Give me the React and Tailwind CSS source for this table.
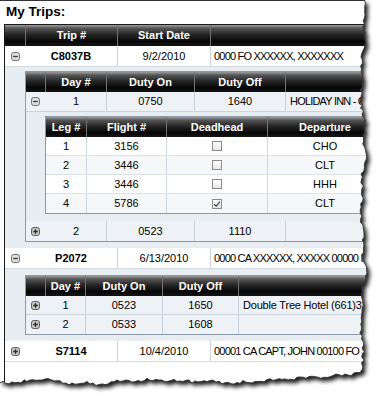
import React from "react";

const HDR =
  "bg-[linear-gradient(to_bottom,#9c9c9c_0%,#555555_16%,#262626_45%,#060606_78%,#151515_100%)]";

function Minus() {
  return (
    <svg width="9" height="9" viewBox="0 0 9 9">
      <rect x="0.5" y="0.5" width="8" height="8" rx="2.2" fill="#dcdcdc" stroke="#707070" />
      <path d="M2.2 4.5H6.8" stroke="#3a3a3a" strokeWidth="1.3" />
    </svg>
  );
}

function Plus() {
  return (
    <svg width="9" height="9" viewBox="0 0 9 9">
      <rect x="0.5" y="0.5" width="8" height="8" rx="2.2" fill="#c4c4c4" stroke="#5e5e5e" />
      <path d="M2.2 4.5H6.8M4.5 2.2V6.8" stroke="#2a2a2a" strokeWidth="1.3" />
    </svg>
  );
}

function Check({ checked }) {
  return (
    <div className="w-[10px] h-[10px] border border-[#8c8c8c] bg-[linear-gradient(to_bottom,#ffffff,#e6e6e6)] flex items-center justify-center">
      {checked && (
        <svg width="8" height="8" viewBox="0 0 8 8">
          <path d="M1.2 4.2L3.2 6.1L6.9 1.6" fill="none" stroke="#3b3b3b" strokeWidth="1.2" />
        </svg>
      )}
    </div>
  );
}

function MainHeader() {
  return (
    <div className={`flex h-[21px] ${HDR} text-white font-bold`}>
      <div className="w-[20px] shrink-0" />
      <div className="w-[92px] shrink-0 border-l border-[#727272] flex items-center justify-center">Trip #</div>
      <div className="w-[93px] shrink-0 border-l border-[#727272] flex items-center justify-center">Start Date</div>
      <div className="flex-1 border-l border-[#727272]" />
    </div>
  );
}

function MainRow({ open, trip, date, crew }) {
  return (
    <div className="flex h-[21px] bg-white border-b border-[#d2dae3]">
      <div className="w-[20px] shrink-0 flex items-center justify-center">{open ? <Minus /> : <Plus />}</div>
      <div className="w-[92px] shrink-0 flex items-center justify-center font-bold">{trip}</div>
      <div className="w-[93px] shrink-0 border-l border-[#ccd5df] flex items-center justify-center">{date}</div>
      <div className="flex-1 border-l border-[#ccd5df] flex items-center pl-[3px] whitespace-nowrap tracking-[-0.8px]">{crew}</div>
    </div>
  );
}

function DayHeader({ w }) {
  return (
    <div className={`flex h-[20px] ${HDR} text-white font-bold`}>
      <div className="w-[19px] shrink-0" />
      <div className={`${w[0]} shrink-0 border-l border-[#727272] flex items-center justify-center`}>Day #</div>
      <div className={`${w[1]} shrink-0 border-l border-[#727272] flex items-center justify-center`}>Duty On</div>
      <div className={`${w[2]} shrink-0 border-l border-[#727272] flex items-center justify-center`}>Duty Off</div>
      <div className="flex-1 border-l border-[#727272]" />
    </div>
  );
}

function DayRow({ w, h, open, day, on, off, hotel, border, tight }) {
  return (
    <div className={`flex ${h} bg-[#eef2f6] ${border ? "border-b border-[#cbd4de]" : ""}`}>
      <div className="w-[19px] shrink-0 flex items-center justify-center">{open ? <Minus /> : <Plus />}</div>
      <div className={`${w[0]} shrink-0 border-l border-[#eef2f6] flex items-center justify-center`}>{day}</div>
      <div className={`${w[1]} shrink-0 border-l border-[#c6d0db] flex items-center justify-center`}>{on}</div>
      <div className={`${w[2]} shrink-0 border-l border-[#c6d0db] flex items-center justify-center`}>{off}</div>
      <div className={`flex-1 border-l border-[#c6d0db] flex items-center pl-[4px] whitespace-nowrap ${tight ? "tracking-[-0.8px]" : "tracking-[-0.2px]"}`}>
        {hotel}
      </div>
    </div>
  );
}

function LegRow({ leg, flight, dh, dep, alt, last }) {
  return (
    <div className={`flex h-[19px] ${alt ? "bg-[#f6f7f8]" : "bg-white"} ${last ? "" : "border-b border-[#dbe2e9]"}`}>
      <div className="w-[40px] shrink-0 flex items-center justify-center">{leg}</div>
      <div className="w-[80px] shrink-0 border-l border-[#cfd8e1] flex items-center justify-center">{flight}</div>
      <div className="w-[101px] shrink-0 border-l border-[#cfd8e1] flex items-center justify-center">
        <Check checked={dh} />
      </div>
      <div className="flex-1 border-l border-[#cfd8e1] flex items-center justify-center pr-[2px]">{dep}</div>
    </div>
  );
}

function LegTable() {
  return (
    <div className="w-[340px] border border-[#8d99a7]">
      <div className={`flex h-[20px] ${HDR} text-white font-bold`}>
        <div className="w-[40px] shrink-0 flex items-center justify-center">Leg #</div>
        <div className="w-[80px] shrink-0 border-l border-[#727272] flex items-center justify-center">Flight #</div>
        <div className="w-[101px] shrink-0 border-l border-[#727272] flex items-center justify-center">Deadhead</div>
        <div className="flex-1 border-l border-[#727272] flex items-center justify-center pr-[2px]">Departure</div>
      </div>
      <LegRow leg="1" flight="3156" dep="CHO" />
      <LegRow leg="2" flight="3446" dep="CLT" alt />
      <LegRow leg="3" flight="3446" dep="HHH" />
      <LegRow leg="4" flight="5786" dep="CLT" dh alt last />
    </div>
  );
}

const W1 = ["w-[61px]", "w-[88px]", "w-[91px]"];
const W2 = ["w-[40px]", "w-[77px]", "w-[76px]"];

function Detail1() {
  return (
    <div className="bg-[#e8edf2] pl-[20px] pt-[4px] pb-[6px]">
      <div className="w-[380px] border border-[#8d99a7]">
        <DayHeader w={W1} />
        <DayRow w={W1} h="h-[20px]" open day="1" on="0750" off="1640" hotel="HOLIDAY INN - CHARLOTTESVILLE" border tight />
        <div className="bg-[#e8edf2] pl-[19px] pt-[4px] pb-[7px]">
          <LegTable />
        </div>
        <DayRow w={W1} h="h-[20px]" day="2" on="0523" off="1110" hotel="" />
      </div>
    </div>
  );
}

function Detail2() {
  return (
    <div className="bg-[#e8edf2] pl-[20px] pt-[6px] pb-[6px]">
      <div className="w-[380px] border border-[#8d99a7]">
        <DayHeader w={W2} />
        <DayRow w={W2} h="h-[19px]" day="1" on="0523" off="1650" hotel="Double Tree Hotel (661)327-0681" border />
        <DayRow w={W2} h="h-[19px]" day="2" on="0533" off="1608" hotel="" />
      </div>
    </div>
  );
}

function buildEdge() {
  let s = 987654;
  const rnd = () => {
    s = (s * 16807) % 2147483647;
    return s / 2147483647 - 0.5;
  };
  const right = [];
  for (let y = 0; y <= 369; y += 3) {
    const x = 363 + 1.6 * Math.sin(y / 19) + 1.1 * Math.sin(y / 6.1 + 1) + rnd() * 2.8;
    right.push([x, y]);
  }
  const keys = [
    [362, 372], [345, 375], [330, 377], [300, 378], [270, 380], [240, 383], [210, 382],
    [185, 381], [150, 380], [120, 381], [95, 384], [70, 383], [50, 380], [35, 379], [20, 383], [0, 382],
  ];
  const interp = (x) => {
    for (let i = 0; i < keys.length - 1; i++) {
      const [x1, y1] = keys[i];
      const [x2, y2] = keys[i + 1];
      if (x <= x1 && x >= x2) return y1 + ((y2 - y1) * (x - x1)) / (x2 - x1);
    }
    return 382;
  };
  const bottom = [];
  for (let x = 360; x >= 0; x -= 3) bottom.push([x, interp(x) + rnd() * 2.8 + 0.8 * Math.sin(x / 5)]);
  bottom.push([0, 382]);
  const pts = [...right, ...bottom];
  const edge = pts.map((p, i) => `${i ? "L" : "M"}${p[0].toFixed(1)} ${p[1].toFixed(1)}`).join(" ");
  const poly = `M0 0 L${right[0][0].toFixed(1)} 0 ` + edge.replace(/^M/, "L") + " L0 382 Z";
  return { edge, poly };
}

function TornEdge() {
  const { edge, poly } = buildEdge();
  return (
    <svg className="absolute left-0 top-0 pointer-events-none" width="381" height="400" viewBox="0 0 381 400">
      <defs>
        <clipPath id="outside">
          <path d={`M0 0H381V400H0Z ${poly}`} clipRule="evenodd" />
        </clipPath>
        <filter id="blur" x="-10%" y="-10%" width="120%" height="120%">
          <feGaussianBlur stdDeviation="2.2" />
        </filter>
      </defs>
      <g clipPath="url(#outside)">
        <rect width="381" height="400" fill="#ffffff" />
        <path d={poly} transform="translate(3 3.5)" fill="#000" opacity="0.9" filter="url(#blur)" />
      </g>
      <path d={edge} fill="none" stroke="#333" strokeWidth="0.9" />
    </svg>
  );
}

export default function App() {
  return (
    <div className="relative w-[381px] h-[400px] overflow-hidden bg-white text-black font-['Liberation_Sans',Arial,sans-serif] text-[11px]">
      <div className="h-[24px] border-t border-[#333] pl-[6px] pt-[1px] text-[13.5px] leading-[19px] font-bold">My Trips:</div>
      <div className="ml-[4px] w-[420px] h-[376px] border-l border-t border-[#1a1a1a]">
        <MainHeader />
        <MainRow open trip="C8037B" date="9/2/2010" crew="0000 FO XXXXXX, XXXXXXX" />
        <Detail1 />
        <MainRow open trip="P2072" date="6/13/2010" crew="0000 CA XXXXXX, XXXXX 00000 FO XXXXX" />
        <Detail2 />
        <MainRow trip="S7114" date="10/4/2010" crew="00001 CA CAPT, JOHN 00100 FO SMITH" />
      </div>
      <TornEdge />
    </div>
  );
}
